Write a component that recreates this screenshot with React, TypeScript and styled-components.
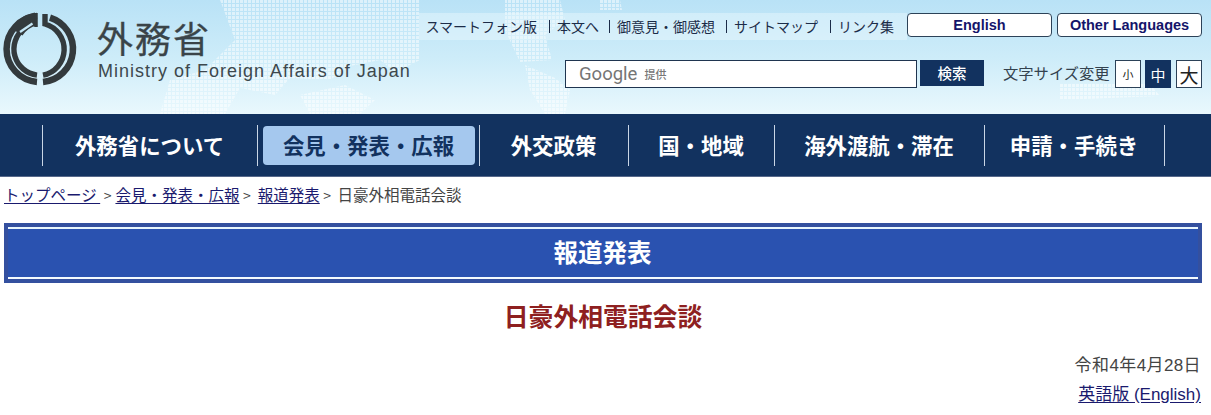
import React from "react";
import styled, { createGlobalStyle } from "styled-components";

const JP = `"Noto Sans CJK JP", "Noto Sans", "Liberation Sans", sans-serif`;
const LATIN = `"Liberation Sans", "Noto Sans CJK JP", sans-serif`;

const Global = createGlobalStyle`
  html, body { margin: 0; padding: 0; background: #fff; overflow: hidden; }
  * { box-sizing: border-box; }
  body { font-family: ${JP}; }
`;

const Header = styled.header`
  position: relative;
  height: 114px;
  display: flex;
  justify-content: space-between;
  background: linear-gradient(180deg, #b9e2f6 0%, #cdecf9 50%, #e9f8fd 100%);
  overflow: hidden;
`;
const MapArt = styled.svg`
  position: absolute;
  inset: 0;
  width: 100%;
  height: 100%;
`;
const Brand = styled.div`
  position: relative;
  display: flex;
  padding-top: 9px;
`;
const LogoSvg = styled.svg`
  width: 90px;
  height: 90px;
  flex: none;
  margin-left: -0.5px;
`;
const BrandText = styled.div`
  display: flex;
  flex-direction: column;
  margin-left: 7.5px;
  padding-top: 4px;
`;
const BrandJa = styled.div`
  font-size: 36px;
  line-height: 48px;
  letter-spacing: 2px;
  color: #3a4448;
  -webkit-text-stroke: 0.3px #3a4448;
`;
const BrandEn = styled.div`
  font-family: ${LATIN};
  font-size: 18px;
  line-height: 20px;
  padding-left: 1px;
  letter-spacing: 1px;
  color: #3d484d;
`;
const Tools = styled.div`
  position: relative;
  display: flex;
  flex-direction: column;
  padding: 13px 9px 0 0;
`;
const TopRow = styled.div`
  display: flex;
  justify-content: flex-end;
  align-items: flex-start;
`;
const LinkStrip = styled.div`
  display: flex;
  align-items: center;
  height: 27px;
  padding: 0 13px 2px 6px;
  font-size: 14px;
  color: #1c2c48;
  background: rgba(235, 248, 253, 0.45);
`;
const TopLink = styled.span`
  white-space: nowrap;
`;
const Bar = styled.span<{ $left: number }>`
  width: 1px;
  height: 13px;
  margin: 1px 7px 0 ${(p) => p.$left}px;
  background: #1c2c48;
`;
const LangButton = styled.div`
  width: 145px;
  height: 24px;
  display: flex;
  align-items: center;
  justify-content: center;
  font-family: ${LATIN};
  font-weight: 700;
  font-size: 14.5px;
  color: #14146a;
  background: #fff;
  border: 1px solid #2c4258;
  border-radius: 4px;
  & + & { margin-left: 5px; }
`;
const SearchRow = styled.div`
  display: flex;
  justify-content: flex-end;
  align-items: flex-start;
  margin-top: 20px;
`;
const SearchBox = styled.div`
  width: 352px;
  height: 28px;
  display: flex;
  align-items: center;
  padding-left: 13px;
  background: #fff;
  border: 1px solid #1f3550;
`;
const GoogleMark = styled.span`
  font-family: "Roboto", ${LATIN};
  font-size: 18.5px;
  color: #757575;
`;
const Powered = styled.span`
  font-size: 11px;
  margin-left: 7px;
  color: #777;
  font-weight: 500;
`;
const SearchButton = styled.div`
  width: 64px;
  height: 26px;
  margin-left: 3px;
  padding-bottom: 1px;
  display: flex;
  align-items: center;
  justify-content: center;
  font-size: 14.5px;
  font-weight: 500;
  color: #fff;
  background: #12325f;
`;
const SizeLabel = styled.span`
  margin-left: 19px;
  width: 112px;
  font-size: 15.3px;
  line-height: 25px;
  color: #33424f;
  white-space: nowrap;
`;
const SizeButton = styled.div<{ $on?: boolean; $size: number }>`
  width: 26px;
  height: 28px;
  margin-right: 4px;
  &:last-child { margin-right: 0; margin-left: 1px; }
  display: flex;
  align-items: center;
  justify-content: center;
  font-size: ${(p) => p.$size}px;
  color: ${(p) => (p.$on ? "#fff" : "#222")};
  background: ${(p) => (p.$on ? "#12325f" : "#fff")};
  border: 1px solid ${(p) => (p.$on ? "#12325f" : "#2c4258")};
`;

const Nav = styled.nav`
  height: 63px;
  display: flex;
  align-items: center;
  padding-left: 42px;
  background: #12325f;
  border-bottom: 1px solid #56688a;
`;
const NavItem = styled.div<{ $w: number; $active?: boolean; $last?: boolean }>`
  width: ${(p) => p.$w}px;
  height: 41px;
  padding: 0 1px ${(p) => (p.$active ? 0 : 2)}px 0;
  display: flex;
  align-items: center;
  justify-content: center;
  font-size: 21.4px;
  font-weight: 700;
  color: ${(p) => (p.$active ? "#12325f" : "#fff")};
  border-left: 1px solid #c9d6e6;
  border-right: ${(p) => (p.$last ? "1px solid #c9d6e6" : "none")};
`;
const ActivePill = styled.span`
  width: 212px;
  height: 39px;
  margin-left: 1px;
  padding-bottom: 2px;
  display: flex;
  align-items: center;
  justify-content: center;
  border-radius: 4px;
  background: #a5c8ee;
`;

const Crumbs = styled.div`
  height: 46px;
  padding: 5px 0 0 4px;
  font-size: 15.5px;
  line-height: 24px;
  color: #444;
  white-space: nowrap;
`;
const CrumbLink = styled.a`
  color: #1a1a6e;
  text-decoration: underline;
  text-underline-offset: 2px;
`;
const Sep = styled.span<{ $after: number }>`
  margin: 0 ${(p) => p.$after}px 0 3.5px;
  font-size: 14px;
`;

const Banner = styled.div`
  margin: 0 9px 0 4px;
  height: 60px;
  padding: 4px;
  background: #34509f;
`;
const BannerInner = styled.h2`
  margin: 0;
  height: 52px;
  padding: 0 1px 4px 0;
  display: flex;
  align-items: center;
  justify-content: center;
  font-size: 24.5px;
  font-weight: 700;
  color: #fff;
  background: #2a52b0;
  border-top: 2px solid #e9f6fd;
  border-bottom: 2px solid #f4fbff;
`;
const Heading = styled.h1`
  margin: 14px 0 0;
  height: 36px;
  padding-right: 5px;
  text-align: center;
  font-size: 24.8px;
  line-height: 36px;
  font-weight: 700;
  color: #8e2020;
`;
const Meta = styled.div`
  margin-top: 19px;
  padding-right: 10px;
  text-align: right;
  font-size: 17px;
  line-height: 27px;
  color: #444;
`;
const DateLine = styled.div`
  font-family: ${LATIN};
  letter-spacing: 0.4px;
`;
const EnglishLink = styled.a`
  color: #1a1a6e;
  text-decoration: underline;
  text-underline-offset: 2px;
  font-family: ${LATIN};
`;

const Logo = () => (
  <LogoSvg viewBox="0 0 90 90">
    <g transform="translate(0 -10)" fill="none" stroke="#333a3d">
      <path d="M50 18.6A33 33 0 0 1 43 82.9" strokeWidth="6.5" />
      <path d="M45 15V25A26.3 26.3 0 0 1 43 76.1" strokeWidth="5.4" />
      <path d="M37 82.9A33 33 0 0 1 37 17.1" strokeWidth="6.5" />
      <path d="M37 76.1A26.3 26.3 0 0 1 24 29.3" strokeWidth="5.4" />
      <path d="M17 33A29 29 0 0 1 36 20" strokeWidth="13" />
      <path d="M36 14V28" strokeWidth="3.5" />
      <path d="M20 33L32.5 24.5" stroke="#c4e6f6" strokeWidth="2.2" />
    </g>
  </LogoSvg>
);

const blobs = [
  "M160 114 L170 80 L205 70 L235 40 L220 0 L420 0 L420 60 L395 72 L380 60 L350 66 L330 80 L290 78 L275 95 L240 88 L225 114 Z",
  "M300 95 L345 85 L375 100 L360 114 L310 114 Z",
  "M505 0 L560 0 L565 20 L545 35 L552 60 L520 62 L505 30 Z",
  "M525 65 L555 78 L570 90 L565 114 L545 114 L530 90 Z",
  "M600 0 L620 0 L622 10 L600 10 Z",
  "M1060 84 L1150 84 L1160 96 L1060 100 Z",
];

const NAV = [
  { t: "外務省について", w: 215 },
  { t: "会見・発表・広報", w: 222, active: true },
  { t: "外交政策", w: 149 },
  { t: "国・地域", w: 146 },
  { t: "海外渡航・滞在", w: 210 },
  { t: "申請・手続き", w: 181, last: true },
];

export default function App() {
  return (
    <>
      <Global />
      <Header>
        <MapArt viewBox="0 0 1211 114" preserveAspectRatio="none">
          <defs>
            <pattern id="dots" width="4" height="4" patternUnits="userSpaceOnUse">
              <rect width="3" height="3" fill="#ffffff" fillOpacity="0.5" />
            </pattern>
          </defs>
          {blobs.map((d) => (
            <path key={d} d={d} fill="url(#dots)" />
          ))}
        </MapArt>
        <Brand>
          <Logo />
          <BrandText>
            <BrandJa>外務省</BrandJa>
            <BrandEn>Ministry of Foreign Affairs of Japan</BrandEn>
          </BrandText>
        </Brand>
        <Tools>
          <TopRow>
            <LinkStrip>
              <TopLink>スマートフォン版</TopLink>
              <Bar $left={12} />
              <TopLink>本文へ</TopLink>
              <Bar $left={10} />
              <TopLink>御意見・御感想</TopLink>
              <Bar $left={11} />
              <TopLink>サイトマップ</TopLink>
              <Bar $left={12} />
              <TopLink>リンク集</TopLink>
            </LinkStrip>
            <LangButton>English</LangButton>
            <LangButton>Other Languages</LangButton>
          </TopRow>
          <SearchRow>
            <SearchBox>
              <GoogleMark>Google</GoogleMark>
              <Powered>提供</Powered>
            </SearchBox>
            <SearchButton>検索</SearchButton>
            <SizeLabel>文字サイズ変更</SizeLabel>
            <SizeButton $size={11}>小</SizeButton>
            <SizeButton $size={15} $on>中</SizeButton>
            <SizeButton $size={19}>大</SizeButton>
          </SearchRow>
        </Tools>
      </Header>
      <Nav>
        {NAV.map((n) => (
          <NavItem key={n.t} $w={n.w} $active={n.active} $last={n.last}>
            {n.active ? <ActivePill>{n.t}</ActivePill> : n.t}
          </NavItem>
        ))}
      </Nav>
      <Crumbs>
        <CrumbLink>トップページ </CrumbLink>
        <Sep $after={4}>&gt;</Sep>
        <CrumbLink>会見・発表・広報</CrumbLink>
        <Sep $after={7}>&gt;</Sep>
        <CrumbLink>報道発表</CrumbLink>
        <Sep $after={6.5}>&gt;</Sep>
        日豪外相電話会談
      </Crumbs>
      <Banner>
        <BannerInner>報道発表</BannerInner>
      </Banner>
      <Heading>日豪外相電話会談</Heading>
      <Meta>
        <DateLine>令和4年4月28日</DateLine>
        <EnglishLink>英語版 (English)</EnglishLink>
      </Meta>
    </>
  );
}
